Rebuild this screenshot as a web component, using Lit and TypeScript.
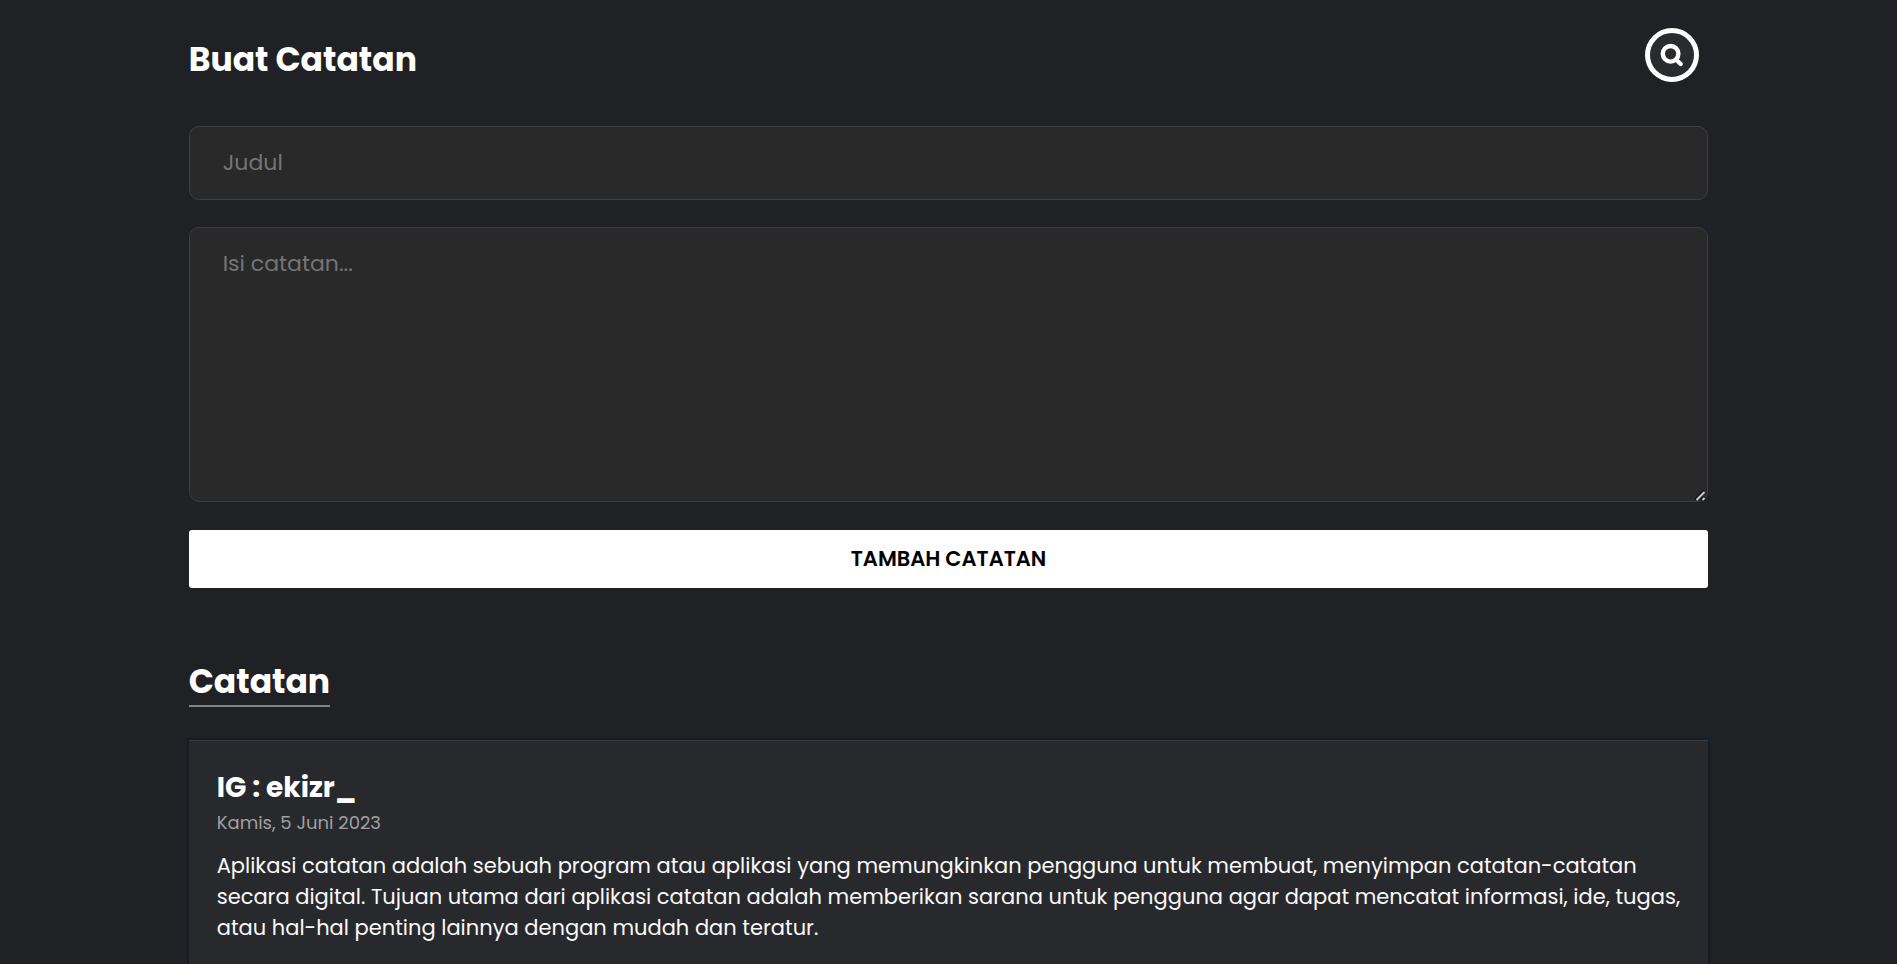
import { LitElement, html, css } from "lit";
import { customElement, state } from "lit/decorators.js";

interface Note {
  title: string;
  date: string;
  body: string;
}

@customElement("app-root")
export class AppRoot extends LitElement {
  static styles = css`
    :host {
      display: block;
      box-sizing: border-box;
      height: 100vh;
      overflow-y: auto;
      scrollbar-width: none;
      padding: 28px calc(10% - 1px) 0;
      background: #202124;
      color: #fff;
      font-family: Poppins, Inter, "Open Sans", sans-serif;
    }
    *, *::before, *::after { box-sizing: border-box; }
    h1, h2, h3, p { margin: 0; }
    header {
      display: flex;
      justify-content: space-between;
      align-items: flex-start;
      padding-right: 9px;
      height: 98px;
    }
    h1, h2 { font-size: 33px; line-height: 48px; font-weight: 700; }
    h1 { padding-top: 8px; }
    .search {
      display: grid;
      place-items: center;
      width: 54px;
      height: 54px;
      padding: 0;
      border: 5px solid #fff;
      border-radius: 50%;
      background: #2a2b2d;
      color: #fff;
    }
    .search svg { width: 24px; height: 24px; display: block; }
    form { display: flex; flex-direction: column; }
    .field {
      display: block;
      width: 100%;
      margin: 0 0 27px;
      padding: 20px 33px;
      border: 1px solid #3d3e3d;
      border-radius: 10px;
      background: #292929;
      color: #fff;
      font-family: inherit;
      font-size: 22px;
      line-height: 32px;
      outline: none;
    }
    .field::placeholder { color: #757575; opacity: 1; }
    .title { height: 74px; padding-bottom: 22px; }
    .text { height: 275px; margin-bottom: 28px; resize: both; }
    .text::-webkit-resizer {
      background: url("data:image/svg+xml,%3Csvg xmlns='http://www.w3.org/2000/svg' width='15' height='15' fill='none' stroke-width='2'%3E%3Cpath d='M3 13.5L12 4.5M8.5 14L12 10.5' stroke='%23101010'/%3E%3Cpath d='M4.5 14L12.5 6M10.5 14L12.5 12' stroke='%23c8c8c8'/%3E%3C/svg%3E") no-repeat right bottom;
    }
    .add {
      height: 58px;
      padding: 0 0 2px;
      border: 0;
      border-radius: 3px;
      background: #fff;
      color: #000;
      font-family: inherit;
      font-size: 21px;
      font-weight: 600;
      text-transform: uppercase;
    }
    h2 {
      width: fit-content;
      margin-top: 70px;
      height: 49px;
      border-bottom: 2px solid #808582;
    }
    .card {
      margin-top: 33px;
      padding: 28px;
      background: #28292d;
      box-shadow: 0 0 0 2px #111d29, inset 0 1px 0 #3a3b3f;
    }
    h3 { font-size: 28px; line-height: 40px; font-weight: 700; }
    .date { font-size: 18px; line-height: 30px; color: #a0a0a1; }
    .body { margin-top: 12px; font-size: 21px; line-height: 31px; color: #fafafa; }
  `;

  @state() private notes: Note[] = [
    {
      title: "IG : ekizr_",
      date: "Kamis, 5 Juni 2023",
      body: "Aplikasi catatan adalah sebuah program atau aplikasi yang memungkinkan pengguna untuk membuat, menyimpan catatan-catatan secara digital. Tujuan utama dari aplikasi catatan adalah memberikan sarana untuk pengguna agar dapat mencatat informasi, ide, tugas, atau hal-hal penting lainnya dengan mudah dan teratur.",
    },
  ];

  private addNote(e: Event) {
    e.preventDefault();
    const form = e.target as HTMLFormElement;
    const data = new FormData(form);
    const title = String(data.get("judul") ?? "").trim();
    const body = String(data.get("isi") ?? "").trim();
    if (!title || !body) return;
    const date = new Date().toLocaleDateString("id-ID", {
      weekday: "long", day: "numeric", month: "long", year: "numeric",
    });
    this.notes = [{ title, date, body }, ...this.notes];
    form.reset();
  }

  render() {
    return html`
      <header>
        <h1>Buat Catatan</h1>
        <button class="search" type="button" aria-label="Cari catatan">
          <svg viewBox="0 0 24 24" fill="none" stroke="currentColor" stroke-width="4.4" stroke-linecap="round" aria-hidden="true">
            <circle cx="10.6" cy="10.8" r="7.8"></circle>
            <path d="M16.3 16.8 L20.6 21"></path>
          </svg>
        </button>
      </header>
      <main>
        <form @submit=${this.addNote}>
          <input class="field title" name="judul" type="text" placeholder="Judul" aria-label="Judul" />
          <textarea class="field text" name="isi" placeholder="Isi catatan..." aria-label="Isi catatan"></textarea>
          <button class="add" type="submit">Tambah Catatan</button>
        </form>
        <section>
          <h2>Catatan</h2>
          ${this.notes.map(
            (n) => html`
              <article class="card">
                <h3>${n.title}</h3>
                <p class="date">${n.date}</p>
                <p class="body">${n.body}</p>
              </article>
            `
          )}
        </section>
      </main>
    `;
  }
}
